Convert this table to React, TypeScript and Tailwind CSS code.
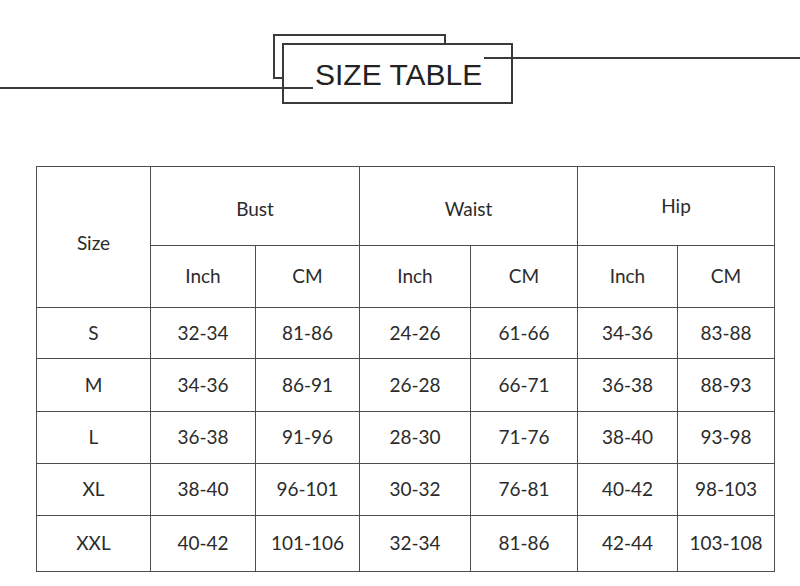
const rows = [
  { size: 'S', h: 'h-[51px]', v: ['32-34', '81-86', '24-26', '61-66', '34-36', '83-88'] },
  { size: 'M', h: 'h-[53px]', v: ['34-36', '86-91', '26-28', '66-71', '36-38', '88-93'] },
  { size: 'L', h: 'h-[52px]', v: ['36-38', '91-96', '28-30', '71-76', '38-40', '93-98'] },
  { size: 'XL', h: 'h-[52px]', v: ['38-40', '96-101', '30-32', '76-81', '40-42', '98-103'] },
  { size: 'XXL', h: 'h-[56px]', v: ['40-42', '101-106', '32-34', '81-86', '42-44', '103-108'] },
];

const cell = 'border border-[#4d4d4d] text-center align-middle p-0';

function TitleBar() {
  return (
    <div className="relative h-[166px] w-full">
      <svg className="absolute inset-0" width="800" height="166" viewBox="0 0 800 166" fill="none">
        {/* back frame */}
        <path d="M283 78 H274 V35 H445 V44" stroke="#3a3a3a" strokeWidth="2" />
        {/* front frame */}
        <rect x="283" y="44" width="229" height="59" stroke="#3a3a3a" strokeWidth="2" />
        {/* side lines */}
        <line x1="0" y1="88" x2="313" y2="88" stroke="#3a3a3a" strokeWidth="2" />
        <line x1="484" y1="58" x2="800" y2="58" stroke="#3a3a3a" strokeWidth="2" />
      </svg>
      <span className="absolute left-[315px] top-[60px] text-[30px] leading-none text-[#222] font-['Liberation_Sans',Arial,sans-serif]">
        SIZE TABLE
      </span>
    </div>
  );
}

export default function App() {
  return (
    <div className="w-[800px] h-[586px] bg-white overflow-hidden">
      <TitleBar />
      <table className="ml-[36px] border-collapse table-fixed w-[738px] text-[19px] text-[#2b2b2b] font-['Lato','Noto_Sans',sans-serif]">
        <colgroup>
          <col className="w-[114px]" />
          <col className="w-[105px]" />
          <col className="w-[104px]" />
          <col className="w-[111px]" />
          <col className="w-[107px]" />
          <col className="w-[100px]" />
          <col className="w-[97px]" />
        </colgroup>
        <thead>
          <tr className="h-[79px]">
            <th rowSpan={2} className={`${cell} font-normal pt-[12px]`}>Size</th>
            <th colSpan={2} className={`${cell} font-normal pt-[6px]`}>Bust</th>
            <th colSpan={2} className={`${cell} font-normal pt-[6px]`}>Waist</th>
            <th colSpan={2} className={`${cell} font-normal`}>Hip</th>
          </tr>
          <tr className="h-[62px]">
            <th className={`${cell} font-normal`}>Inch</th>
            <th className={`${cell} font-normal`}>CM</th>
            <th className={`${cell} font-normal`}>Inch</th>
            <th className={`${cell} font-normal`}>CM</th>
            <th className={`${cell} font-normal`}>Inch</th>
            <th className={`${cell} font-normal`}>CM</th>
          </tr>
        </thead>
        <tbody>
          {rows.map((r) => (
            <tr key={r.size} className={r.h}>
              <td className={cell}>{r.size}</td>
              {r.v.map((x, i) => (
                <td key={i} className={cell}>{x}</td>
              ))}
            </tr>
          ))}
        </tbody>
      </table>
    </div>
  );
}
